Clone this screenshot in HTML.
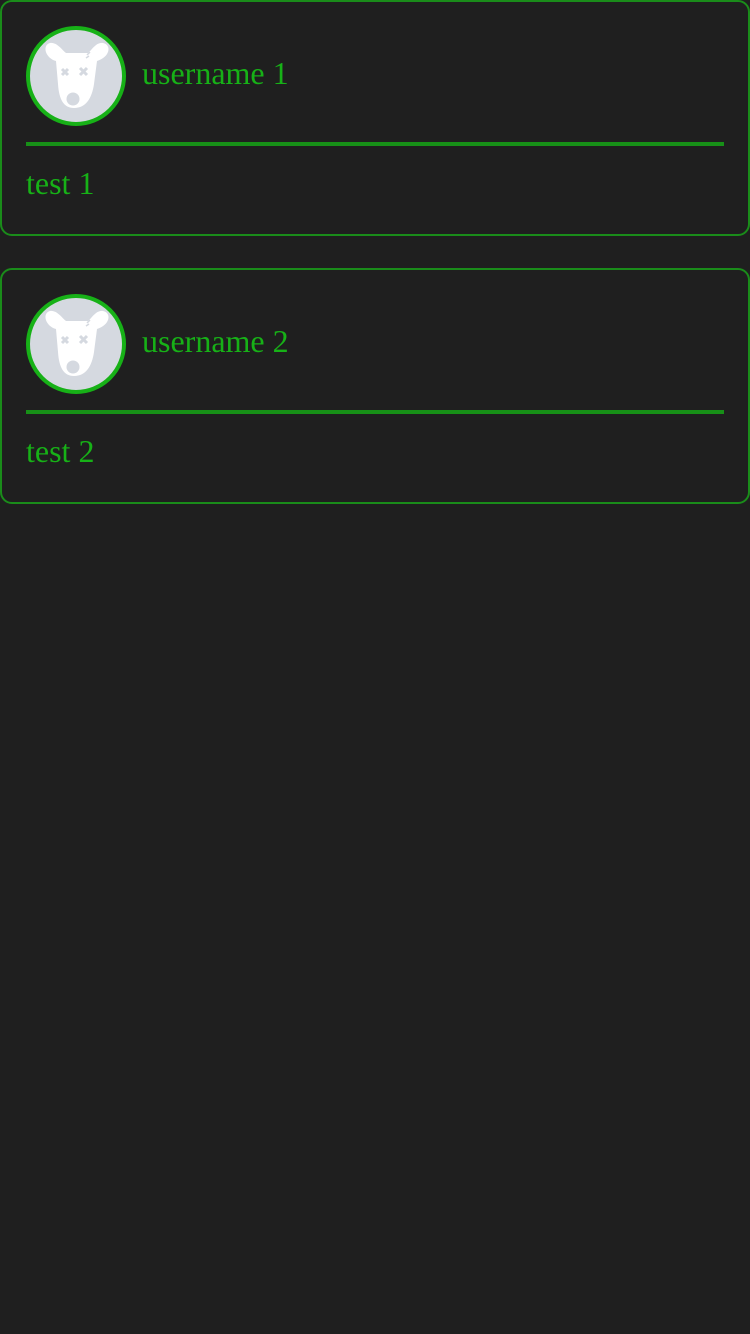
<!DOCTYPE html>
<html><head><style>
body{margin:0;background:#1f1f1f;width:750px;height:1334px;overflow:hidden;font-family:"Liberation Serif",serif;}
.card{position:absolute;left:0;width:746px;height:232px;border:2px solid #1a8c1a;border-radius:12px;}
.av{position:absolute;left:24px;top:24px;width:92px;height:92px;border:4px solid #17b117;border-radius:50%;background:#d5d9e0;overflow:hidden;}
.name{position:absolute;left:140px;top:53px;font-size:32px;color:#17b117;}
.line{position:absolute;left:24px;top:140px;width:698px;height:4px;background:#179017;}
.txt{position:absolute;left:24px;top:163px;font-size:32px;color:#17b117;}
</style></head><body>
<div class="card" style="top:0">
<div class="av"><svg width="92" height="92" viewBox="30 30 92 92"><path d="M50 43 C42 45 45 58 56 61 L58 84 C59 100 64 108 74 108 C86 108 92 98 94 84 L97 61 C110 57 112 45 103 43 C96 42 92 50 88 53 L66 53 C62 50 57 42 50 43Z" fill="#fff"/><circle cx="73" cy="99" r="6.5" fill="#d5d9e0"/><g stroke="#d5d9e0" stroke-width="3"><path d="M62 69l6 6M68 69l-6 6M80 68l7 7M87 68l-7 7"/></g><path d="M87 55l3-3M86 58l3-2" stroke="#d5d9e0" stroke-width="1.5"/></svg></div>
<div class="name">username 1</div><div class="line"></div><div class="txt">test 1</div></div>
<div class="card" style="top:268px">
<div class="av"><svg width="92" height="92" viewBox="30 30 92 92"><path d="M50 43 C42 45 45 58 56 61 L58 84 C59 100 64 108 74 108 C86 108 92 98 94 84 L97 61 C110 57 112 45 103 43 C96 42 92 50 88 53 L66 53 C62 50 57 42 50 43Z" fill="#fff"/><circle cx="73" cy="99" r="6.5" fill="#d5d9e0"/><g stroke="#d5d9e0" stroke-width="3"><path d="M62 69l6 6M68 69l-6 6M80 68l7 7M87 68l-7 7"/></g><path d="M87 55l3-3M86 58l3-2" stroke="#d5d9e0" stroke-width="1.5"/></svg></div>
<div class="name">username 2</div><div class="line"></div><div class="txt">test 2</div></div>
</body></html>
